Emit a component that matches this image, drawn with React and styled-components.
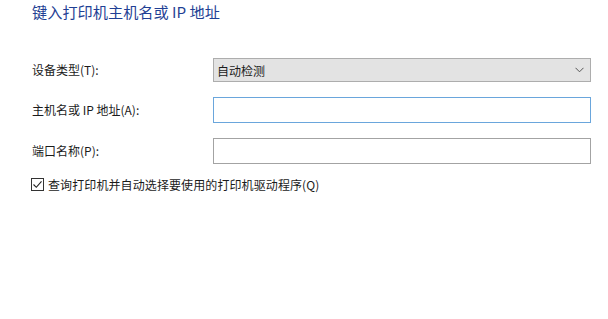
import React from "react";
import styled, { createGlobalStyle } from "styled-components";

const Global = createGlobalStyle`
  html, body { margin: 0; padding: 0; background: #ffffff; }
  body { font-family: "Noto Sans CJK SC", "Noto Sans", sans-serif; }
`;

const Page = styled.div`
  width: 608px;
  height: 319px;
  box-sizing: border-box;
  padding: 0 17px 0 32px;
  background: #fff;
  overflow: hidden;
`;

const Title = styled.h1`
  margin: 0;
  font-size: 15.2px;
  font-weight: 400;
  line-height: 22px;
  color: #1f3f94;
`;

const Form = styled.div`
  margin-top: 36px;
  display: grid;
  grid-template-columns: 181px 378px;
  row-gap: 15px;
  align-items: center;
`;

const Label = styled.label`
  font-size: 12px;
  color: #1b1b1b;
  line-height: 16px;
`;

const Select = styled.div`
  height: 24px;
  box-sizing: border-box;
  border: 1px solid #adadad;
  background: #e3e3e3;
  display: flex;
  align-items: center;
  justify-content: space-between;
  padding: 0 6px 0 3px;
  font-size: 12px;
  color: #1b1b1b;
`;

const Input = styled.input`
  height: 26px;
  box-sizing: border-box;
  width: 100%;
  margin: 0;
  border: 1px solid ${(p) => (p.$focused ? "#6aa6dc" : "#a3a3a3")};
  background: #fff;
  outline: none;
  padding: 0 4px;
  font-family: inherit;
  font-size: 12px;
`;

const CheckRow = styled.label`
  margin-top: 12px;
  margin-left: -1px;
  display: flex;
  align-items: center;
  gap: 4px;
  font-size: 12px;
  color: #1b1b1b;
  letter-spacing: 0.1px;
`;

const Box = styled.span`
  width: 13px;
  height: 13px;
  box-sizing: border-box;
  border: 1px solid #333;
  background: #fff;
  display: flex;
  align-items: center;
  justify-content: center;
`;

export default function App() {
  return (
    <>
      <Global />
      <Page>
        <Title>键入打印机主机名或 IP 地址</Title>
        <Form>
          <Label>设备类型(T):</Label>
          <Select>
            <span>自动检测</span>
            <svg width="9" height="6" viewBox="0 0 9 6">
              <path d="M0.5 0.8 L4.5 4.8 L8.5 0.8" fill="none" stroke="#555" strokeWidth="1" />
            </svg>
          </Select>
          <Label>主机名或 IP 地址(A):</Label>
          <Input $focused />
          <Label>端口名称(P):</Label>
          <Input />
        </Form>
        <CheckRow>
          <Box>
            <svg width="11" height="11" viewBox="0 0 11 11">
              <path d="M1.5 5.5 L4.3 8.3 L9.5 2.3" fill="none" stroke="#222" strokeWidth="1.1" />
            </svg>
          </Box>
          <span>查询打印机并自动选择要使用的打印机驱动程序(Q)</span>
        </CheckRow>
      </Page>
    </>
  );
}
